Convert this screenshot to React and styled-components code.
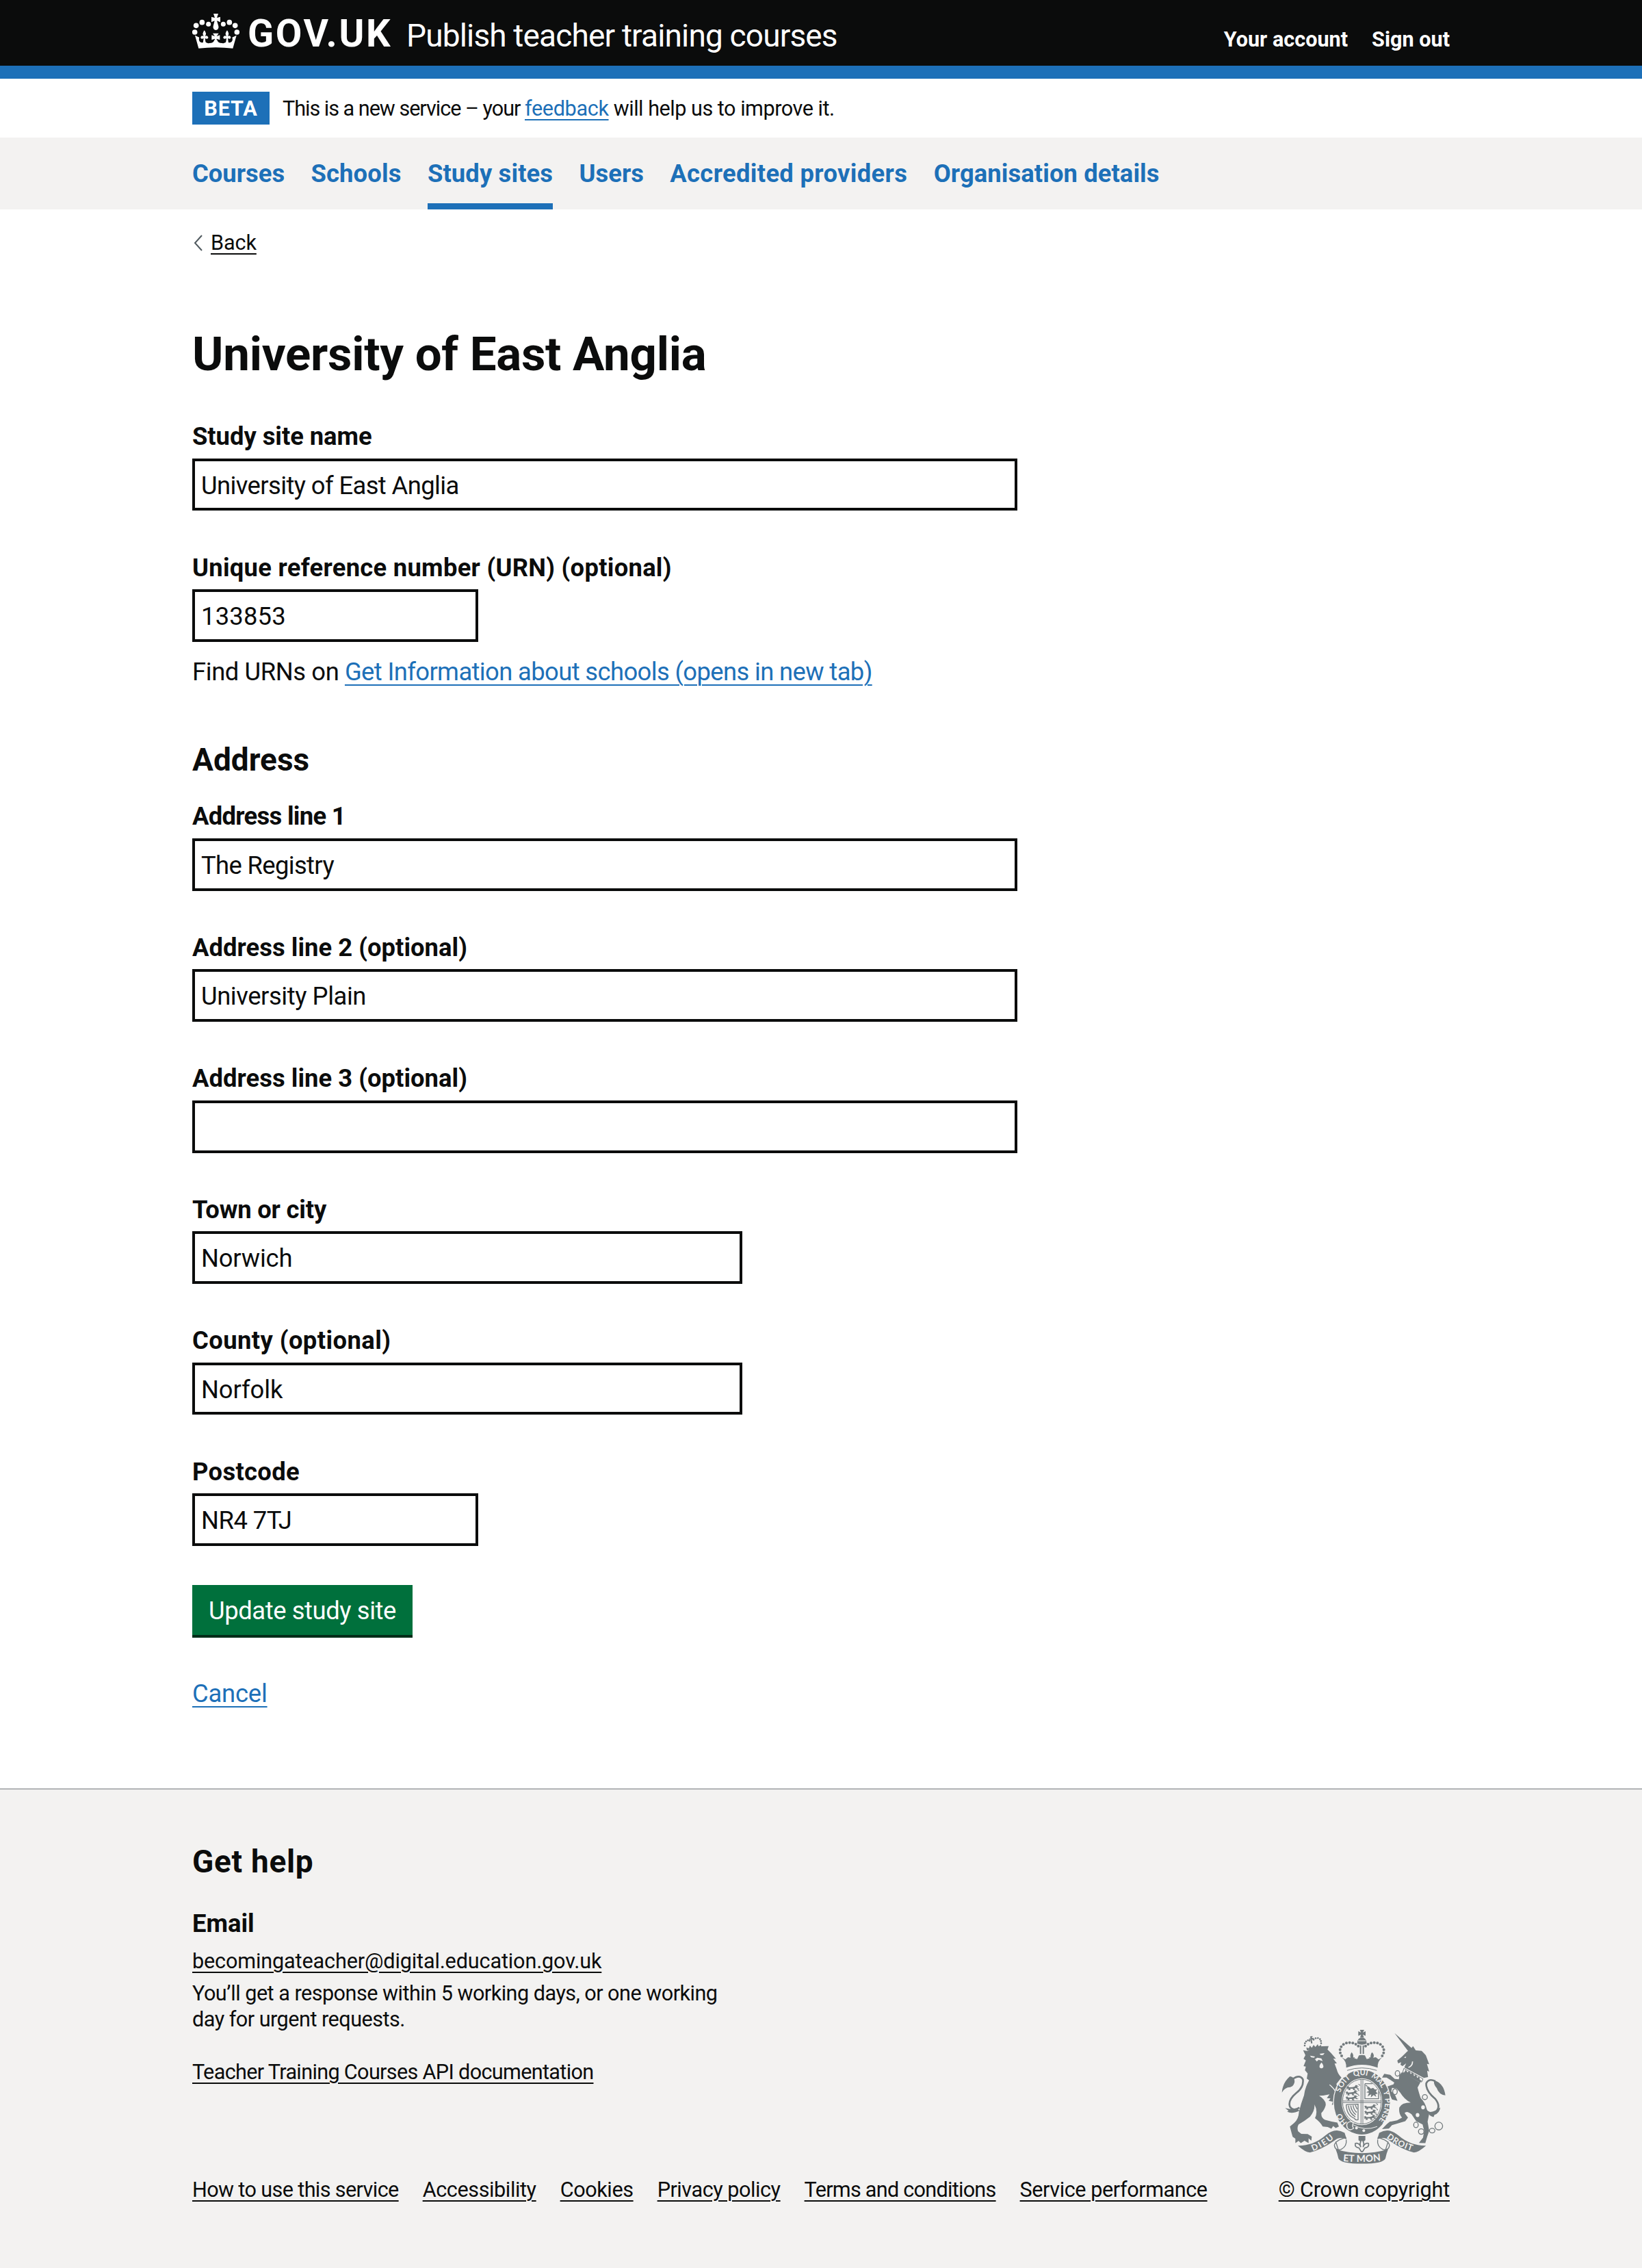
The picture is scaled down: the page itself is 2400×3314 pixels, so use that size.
import React from "react";
import styled, { createGlobalStyle } from "styled-components";

const c = {
  ink: "#0b0c0c",
  blue: "#1d70b8",
  grey: "#f3f2f1",
  line: "#b1b4b6",
  green: "#00703c",
  greenDark: "#002d18",
  crest: "#727a7d",
};

const GlobalStyle = createGlobalStyle`
  *, *::before, *::after { box-sizing: border-box; }
  body {
    margin: 0;
    background: #fff;
    color: ${c.ink};
    font-family: Roboto, "Liberation Sans", sans-serif;
    font-kerning: normal;
  }
  h1, h2, h3, p, ul { margin: 0; padding: 0; }
`;

const Page = styled.div`
  display: flex;
  flex-direction: column;
  min-height: 3314px;
`;

const Container = styled.div`
  width: 1838px;
  margin: 0 auto;
`;

const Track = styled.span`
  letter-spacing: ${(p) => p.$ls || 0}px;
`;

const Link = styled.a`
  color: ${(p) => (p.$plain ? c.ink : c.blue)};
  letter-spacing: ${(p) => p.$ls || 0}px;
  text-decoration: underline;
  text-decoration-thickness: 2px;
  text-underline-offset: 0.1578em;
  white-space: nowrap;
`;

/* Header */
const Header = styled.header`
  height: 115px;
  background: ${c.ink};
  border-bottom: 19px solid ${c.blue};
  color: #fff;
`;
const HeaderRow = styled(Container)`
  display: flex;
  align-items: baseline;
  padding-top: 21px;
`;
const CrownIcon = styled.svg`
  width: 69px;
  height: 51px;
  margin: -1px 12px 0 0;
  align-self: flex-start;
  fill: #fff;
  flex: none;
`;
const LogoText = styled.span`
  width: 232px;
  font-size: 56px;
  line-height: 56px;
  font-weight: 700;
  letter-spacing: 2.6px;
`;
const ServiceName = styled.span`
  font-size: 46px;
  line-height: 46px;
  letter-spacing: -0.84px;
`;
const AccountLinks = styled.nav`
  display: flex;
  gap: 35px;
  margin-left: auto;
  font-size: 30.6px;
  line-height: 38px;
  font-weight: 700;
`;

/* Phase banner */
const PhaseBanner = styled(Container)`
  height: 86px;
  display: flex;
  align-items: center;
`;
const Tag = styled.strong`
  width: 113px;
  height: 48px;
  margin-right: 19px;
  background: ${c.blue};
  color: #fff;
  font-size: 30.6px;
  line-height: 49px;
  letter-spacing: 0.9px;
  text-align: center;
`;
const PhaseText = styled.p`
  padding-top: 1px;
  font-size: 30.6px;
  line-height: 38px;
  white-space: pre;
`;

/* Primary navigation */
const NavBar = styled.div`
  height: 105px;
  background: ${c.grey};
`;
const NavList = styled(Container)`
  display: flex;
  gap: 38.4px;
`;
const NavItem = styled.a`
  height: 105px;
  color: ${c.blue};
  font-size: 36.4px;
  line-height: 106px;
  font-weight: 700;
  letter-spacing: ${(p) => p.$ls}px;
  box-shadow: ${(p) => (p.$current ? `inset 0 -9px 0 ${c.blue}` : "none")};
`;

/* Main content */
const Main = styled(Container)`
  flex: 1;
`;
const BackRow = styled.div`
  display: flex;
  align-items: center;
  gap: 12px;
  padding-top: 29.5px;
  font-size: 30.6px;
  line-height: 38px;
`;
const Chevron = styled.svg`
  width: 15px;
  height: 24px;
  fill: none;
  stroke: #505a5f;
  stroke-width: 2;
`;
const Title = styled.h1`
  margin-top: 106px;
  font-size: 69px;
  line-height: 76px;
  letter-spacing: -0.25px;
`;
const Form = styled.form`
  display: flex;
  flex-direction: column;
  align-items: flex-start;
  padding-top: 56.7px;
`;
const Group = styled.div`
  display: flex;
  flex-direction: column;
  margin-bottom: ${(p) => (p.$hint ? 19.3 : 57.3)}px;
`;
const Label = styled.label`
  margin-bottom: 6.6px;
  font-size: 36.4px;
  line-height: 51px;
  font-weight: 700;
  letter-spacing: ${(p) => p.$ls}px;
`;
const Input = styled.input`
  width: ${(p) => p.$w}px;
  height: 76.6px;
  padding: 2px 9px 0;
  border: 4px solid ${c.ink};
  border-radius: 0;
  background: #fff;
  color: ${c.ink};
  font: 400 36.4px Roboto, sans-serif;
  letter-spacing: ${(p) => p.$ls}px;
`;
const Hint = styled.p`
  margin-bottom: 73.6px;
  font-size: 36.4px;
  line-height: 50px;
`;
const SectionTitle = styled.h2`
  margin-bottom: ${(p) => p.$gap}px;
  font-size: 46px;
  line-height: 58px;
  letter-spacing: ${(p) => p.$ls}px;
`;
const Button = styled.button`
  width: 322px;
  height: 73px;
  margin-bottom: 62px;
  padding: 1px 0 0;
  border: 0;
  background: ${c.green};
  box-shadow: 0 4px 0 ${c.greenDark};
  color: #fff;
  font: 400 36.4px/73px Roboto, sans-serif;
  letter-spacing: -0.41px;
`;
const CancelRow = styled.p`
  font-size: 36.4px;
  line-height: 48px;
`;

/* Footer */
const Footer = styled.footer`
  height: 701px;
  border-top: 2px solid ${c.line};
  background: ${c.grey};
`;
const FooterGrid = styled(Container)`
  display: flex;
  justify-content: space-between;
  align-items: flex-end;
  height: 604.5px;
`;
const FooterMain = styled.div`
  height: 100%;
  padding-top: 76px;
  display: flex;
  flex-direction: column;
  font-size: 30.6px;
  line-height: 38.3px;
`;
const SubTitle = styled.h3`
  margin-bottom: 11.5px;
  font-size: 36.4px;
  line-height: 48px;
`;
const Response = styled.p`
  margin: 9px 0 38.4px;
  letter-spacing: -0.51px;
`;
const FooterLinks = styled.nav`
  display: flex;
  gap: 35px;
  margin-top: auto;
`;
const CrestColumn = styled.div`
  display: flex;
  flex-direction: column;
  align-items: center;
  gap: 19px;
  font-size: 30.6px;
  line-height: 38.3px;
`;
const CrestSvg = styled.svg`
  width: 241.3px;
  height: 198.6px;
  fill: ${c.crest};
  font-family: Lato, Roboto, sans-serif;
  font-weight: 700;
`;

function Crown() {
  const fleur =
    "M86 134Q98 147 89 160Q98 154 103 164Q104 171 96 171L89 169L92 190H80L83 169L76 171Q69 171 70 163Q74 155 83 160Q75 147 86 134Z";
  return (
    <CrownIcon viewBox="33 61 207 153" aria-hidden="true">
      {[[50, 113], [76, 99], [196, 99], [221, 113], [44, 142], [229, 142]].map(([x, y]) => (
        <circle key={`${x}-${y}`} cx={x} cy={y} r="11.5" />
      ))}
      <circle cx="104" cy="107" r="10.5" />
      <circle cx="169" cy="107" r="10.5" />
      <path d="M126 61H147L141 79L156 75V98L141 92L148 116A12 13 0 1 1 125 116L131 92L117 98V75L132 79Z" />
      <path d="M61 213L45 156L64 165Q58 181 72 187Q84 190 88 182Q94 193 108 190Q128 190 130 176L142 176Q144 190 164 190Q178 193 184 182Q188 190 200 187Q214 181 208 165L227 156L211 213Q136 204 61 213Z" />
      <path d={fleur} />
      <path d={fleur} transform="translate(272 0) scale(-1 1)" />
      <path d="M123 147H149L140 160L154 155V176L140 171V192H132V171L118 176V155L132 160Z" />
    </CrownIcon>
  );
}

/* Pearls of the left arch; the right arch mirrors them about x = 453. */
const pearls = [
  [364, 190], [358, 177], [357, 163], [362, 150], [372, 140], [385, 134],
  [399, 132], [413, 134], [426, 139], [437, 147],
];

function Passant({ x, y }) {
  return (
    <path
      transform={`translate(${x} ${y})`}
      d="M0 4L8 1L12 6L26 5L36 3L40 -4L50 -3L46 0L56 1L46 4L50 9L58 12L48 13L42 9L34 12L40 18L30 18L28 12L16 12L18 18H8L10 11L2 15L4 9Z M50 -8Q62 -10 60 0L57 -3Z"
    />
  );
}

function Ribbon() {
  return (
    <g>
      <path d="M172 584Q240 585 292 540Q335 502 377 528L386 556Q355 543 335 560Q275 602 225 614Q204 613 172 584Z" />
      <path
        d="M384 548Q336 560 332 582Q336 608 362 600Q388 586 384 558M338 566L350 604"
        fill="none"
        stroke={c.crest}
        strokeWidth="4"
      />
    </g>
  );
}

const garterWords = [
  ["SOIT", 2, 78],
  ["QUI", 96, 60],
  ["MAL", 172, 70],
  ["Y", 256, 20],
  ["PENSE", 288, 104],
];

function Crest() {
  const bg = c.grey;
  return (
    <CrestSvg viewBox="100 70 724 596" role="img" aria-label="Royal coat of arms">
      {/* lion */}
      <g transform="translate(75 45)">
        <path d="M120 120L138 124Q165 104 205 103L232 102L227 117L242 132L264 158L252 157L268 178L258 179L268 206Q272 225 288 240L266 268L275 300L290 330L290 368L280 358L276 372L264 368L266 355L246 360L250 346L232 342L240 332L224 330L236 314L208 319L190 320Q222 340 219 362Q214 382 200 396Q198 416 216 426L245 433L270 438L277 455L263 462L252 453L244 465L228 457L206 455Q196 436 172 418Q186 390 170 358Q172 385 150 412Q125 432 100 446Q92 460 98 476L112 487L140 488L158 499L156 517L144 507L144 528L126 517L110 528L100 518L86 528L86 508L74 500L68 478L62 455L80 440Q100 425 102 390Q110 355 124 318Q128 285 146 252L136 245L140 222L128 208L132 192L122 190L132 165L122 158L130 142Z" />
        <path
          d="M72 248Q105 224 119 248Q124 282 90 308Q52 340 62 368Q76 390 104 372"
          fill="none"
          stroke={c.crest}
          strokeWidth="8"
        />
        <path d="M27 306Q30 262 62 235Q86 238 82 262Q76 284 52 284Q36 290 27 306Z M41 374Q62 380 96 378L104 386Q70 402 50 390L56 386Z" />
        <g fill={bg}>
          <path d="M150 144L172 148L168 153L156 152ZM192 136L214 133L208 141L198 142Z" />
          <path d="M172 160L182 153L200 156L206 168L188 162L180 170Z" />
          <path d="M201 174Q212 188 208 196Q200 204 192 195Q190 184 201 174Z" />
        </g>
        <path d="M236 272Q262 292 276 330" fill="none" stroke={bg} strokeWidth="4" />
        <path
          d="M137 122L134 108L145 112L150 100L158 110L166 97L174 106L184 94L188 103L199 97L200 110Q165 112 137 122Z"
        />
        {[[127, 100], [128, 90], [133, 82], [141, 77], [149, 79], [166, 74], [175, 68], [185, 67], [194, 72], [198, 80], [199, 90]].map(
          ([x, y]) => (
            <circle key={`${x}-${y}`} cx={x} cy={y} r="4" />
          )
        )}
        <path d="M150 60L162 58L158 67L167 66L166 75L158 72L161 90L154 90L154 74L147 77L146 69L153 69Z" />
      </g>

      {/* unicorn */}
      <g transform="translate(435 45)">
        <path d="M161 45L222 126L240 114Z" />
        <path d="M216 126L232 116L242 102L254 121L280 123L298 142L313 182L303 180L313 214L304 210L308 238L290 242L204 196L212 178L196 190L187 184L190 173L177 178L173 166L194 148Z" />
        <path d="M222 196Q240 190 240 170" fill="none" stroke={bg} strokeWidth="5" />
        <path d="M202 152L212 148L210 155Z" fill={bg} />
        <path
          d="M202 200L286 246L280 260L197 216Z"
          fill={bg}
          stroke={c.crest}
          strokeWidth="3"
        />
        <path d="M206 214L210 206L218 218L226 210L232 225L241 217L247 234L256 226L260 242L270 236L272 250L280 254L274 262L200 222Z" />
        <path d="M194 216L274 262L262 284Q270 315 276 330Q296 350 302 378L312 404L306 434L313 474L304 500L296 528L268 527L286 504L291 474L284 446L256 432L236 402Q215 384 205 396L220 416L208 432L150 449L136 464L106 466L128 444L140 434L172 428L194 416Q178 398 182 372Q192 350 232 350Q204 336 186 306L170 288L150 285L147 300L164 318L174 342L150 336L132 300L118 284L156 270L160 262L142 250L126 240L106 240L116 224L142 228L162 246L180 248L182 230Z" />
        <path
          d="M340 256Q310 242 300 266Q298 300 340 334Q368 370 338 394Q318 404 300 386"
          fill="none"
          stroke={c.crest}
          strokeWidth="8"
        />
        <path d="M334 252Q376 262 384 318Q356 316 346 286Q332 272 334 252ZM298 382Q318 404 362 372Q358 398 336 404L332 414Q310 408 298 382Z" />
        <g fill={bg}>
          <ellipse cx="286" cy="371" rx="8" ry="9" />
          <ellipse cx="262" cy="405" rx="8" ry="9" />
        </g>
        <g fill="none" stroke={c.crest} strokeWidth="4">
          <ellipse cx="174" cy="222" rx="10" ry="12" />
          <ellipse cx="163" cy="302" rx="10" ry="13" />
          <circle cx="294" cy="326" r="11" />
          <ellipse cx="255" cy="448" rx="10" ry="12" />
          <circle cx="278" cy="477" r="12" />
          <ellipse cx="326" cy="473" rx="12" ry="10" />
          <circle cx="355" cy="453" r="17" />
        </g>
      </g>

      {/* garter and shield */}
      <ellipse cx="453" cy="393" rx="127" ry="147" fill={bg} />
      <ellipse cx="453" cy="393" rx="123" ry="142" />
      <ellipse cx="453" cy="391" rx="89" ry="103" fill={bg} />
      <ellipse cx="453" cy="391" rx="85" ry="98" fill={bg} stroke={c.crest} strokeWidth="3" />
      <path d="M449 293V489M457 293V489M368 388H538M368 395H538" stroke={c.crest} strokeWidth="3" />
      <Passant x={385} y={322} />
      <Passant x={381} y={345} />
      <Passant x={381} y={367} />
      <Passant x={463} y={407} />
      <Passant x={463} y={430} />
      <Passant x={461} y={453} />
      <path d="M466 312H500M466 312V378H526V345M470 318L478 326" fill="none" stroke={c.crest} strokeWidth="4" />
      <path d="M474 330L482 324L492 334L502 330L510 338L520 336L514 346L522 356L512 358L516 370L504 362L492 372L494 358L478 368L484 352L472 350L484 344Z" />
      <path
        d="M384 404L436 402V470Q424 474 420 464Q386 452 384 404M394 408Q396 440 424 458M404 408Q406 432 426 448M414 407Q416 426 430 438M424 406L432 424"
        fill="none"
        stroke={c.crest}
        strokeWidth="4"
      />
      <g fill={bg}>
        <path id="garter-main" d="M358 353A101 118 0 1 1 518 483" fill="none" />
        <path id="garter-start" d="M389 483A101 118 0 0 1 352 400" fill="none" />
        {garterWords.map(([word, offset, length]) => (
          <text key={word} fontSize="33">
            <textPath href="#garter-main" startOffset={offset} textLength={length}>{word}</textPath>
          </text>
        ))}
        <text fontSize="33">
          <textPath href="#garter-start">HO</textPath>
        </text>
        <circle cx="429" cy="507" r="6" />
        <circle cx="461" cy="518" r="6" />
      </g>
      <path d="M388 486Q402 472 416 484Q408 494 416 508Q400 520 390 508Q384 498 388 486Z" fill={c.crest} stroke={bg} strokeWidth="4" />
      <path d="M414 492Q465 522 520 500" fill="none" stroke={bg} strokeWidth="3" />

      {/* crown over the garter */}
      <path d="M364 176L374 200Q386 214 384 244Q380 258 392 266Q453 240 514 266Q526 258 522 244Q520 214 532 200L542 176Z" fill={bg} />
      <path d="M364 196L380 206L392 196L402 206L408 176L416 200L432 204L440 188L453 186L466 188L474 204L490 200L494 176L502 206L514 196L526 206L542 196Q520 214 522 242Q453 216 384 242Q386 214 364 196Z" />
      <path d="M388 254Q453 232 518 254" fill="none" stroke={c.crest} strokeWidth="3" />
      {pearls.map(([x, y]) => (
        <g key={`${x}-${y}`}>
          <circle cx={x} cy={y} r="6" />
          <circle cx={906 - x} cy={y} r="6" />
        </g>
      ))}
      <path d="M432 136Q433 110 453 110Q473 110 474 136Q453 146 432 136Z" />
      <path d="M436 124H470" stroke={bg} strokeWidth="3" />
      <path d="M447 144V182M459 144V182" stroke={c.crest} strokeWidth="6" />
      <path d="M444 76H463L457 88L469 82V102L457 97L462 110H445L449 97L437 102V82L449 88Z" />
      <path d="M408 174Q420 188 412 198L422 196L416 208H398L392 196L404 198Q398 188 408 174Z" />
      <path d="M498 174Q510 188 502 198L514 196L508 208H490L484 196L494 198Q488 188 498 174Z" />

      {/* motto ribbon */}
      <Ribbon />
      <g transform="translate(906 0) scale(-1 1)">
        <Ribbon />
      </g>
      <path d="M438 541H468V560L460 566H446L438 560Z" />
      <path
        d="M453 556Q466 574 458 590Q466 570 482 574Q486 592 466 594L456 610H450L440 594Q420 592 424 574Q440 570 448 590Q440 574 453 556Z"
        fill={bg}
        stroke={c.crest}
        strokeWidth="5"
      />
      <path d="M338 600Q453 634 568 600Q560 620 556 640Q546 663 453 663Q360 663 350 640Q346 620 338 600Z" />
      <g fill={bg} fontSize="42">
        <path id="motto-left" d="M238 608Q290 588 336 548" fill="none" />
        <path id="motto-mid" d="M370 652Q453 660 540 649" fill="none" />
        <path id="motto-right" d="M560 549Q608 588 676 608" fill="none" />
        <text fontSize="37">
          <textPath href="#motto-left" textLength="108">DIEU</textPath>
        </text>
        <text>
          <textPath href="#motto-mid" textLength="166">ET MON</textPath>
        </text>
        <text fontSize="37">
          <textPath href="#motto-right" textLength="126">DROIT</textPath>
        </text>
      </g>
    </CrestSvg>
  );
}

const navItems = [
  ["Courses", 0],
  ["Schools", 0.12],
  ["Study sites", 0.12],
  ["Users", 0],
  ["Accredited providers", 0.33],
  ["Organisation details", 0.08],
];

const addressFields = [
  { id: "line1", label: "Address line 1", ls: -0.7, value: "The Registry", vls: -0.64, w: 1206 },
  { id: "line2", label: "Address line 2 (optional)", ls: 0.03, value: "University Plain", vls: -0.43, w: 1206 },
  { id: "line3", label: "Address line 3 (optional)", ls: 0.03, value: "", vls: 0, w: 1206 },
  { id: "town", label: "Town or city", ls: -0.19, value: "Norwich", vls: -0.2, w: 804 },
  { id: "county", label: "County (optional)", ls: 0.42, value: "Norfolk", vls: -0.1, w: 804 },
  { id: "postcode", label: "Postcode", ls: 0.32, value: "NR4 7TJ", vls: -0.5, w: 418 },
];

const footerLinks = [
  ["How to use this service", -0.62],
  ["Accessibility", -0.4],
  ["Cookies", -0.4],
  ["Privacy policy", -0.46],
  ["Terms and conditions", -0.73],
  ["Service performance", -0.43],
];

function Field({ id, label, ls, value, vls, w, hint }) {
  return (
    <Group $hint={hint}>
      <Label htmlFor={id} $ls={ls}>{label}</Label>
      <Input id={id} type="text" defaultValue={value} $ls={vls} $w={w} />
    </Group>
  );
}

export default function App() {
  return (
    <Page>
      <GlobalStyle />
      <Header>
        <HeaderRow>
          <Crown />
          <LogoText>GOV.UK</LogoText>
          <ServiceName>Publish teacher training courses</ServiceName>
          <AccountLinks>
            <Track>Your account</Track>
            <Track>Sign out</Track>
          </AccountLinks>
        </HeaderRow>
      </Header>

      <PhaseBanner>
        <Tag>BETA</Tag>
        <PhaseText>
          <Track $ls={-1.02}>{"This is a new service – your "}</Track>
          <Link $ls={-0.35}>feedback</Link>
          <Track $ls={-0.48}>{" will help us to improve it."}</Track>
        </PhaseText>
      </PhaseBanner>

      <NavBar>
        <NavList as="nav">
          {navItems.map(([label, ls]) => (
            <NavItem key={label} $ls={ls} $current={label === "Study sites"}>{label}</NavItem>
          ))}
        </NavList>
      </NavBar>

      <Main as="main">
        <BackRow>
          <Chevron viewBox="0 0 15 24">
            <path d="M14 1L4 12L14 23" />
          </Chevron>
          <Link $plain $ls={-0.1}>Back</Link>
        </BackRow>
        <Title>University of East Anglia</Title>
        <Form>
          <Field id="name" label="Study site name" ls={-0.05} value="University of East Anglia" vls={-0.6} w={1206} />
          <Field id="urn" label="Unique reference number (URN) (optional)" ls={0.27} value="133853" vls={0.2} w={418} hint />
          <Hint>
            <Track $ls={-0.41}>Find URNs on </Track>
            <Link $ls={-0.62}>Get Information about schools (opens in new tab)</Link>
          </Hint>
          <SectionTitle $gap={28.6} $ls={0}>Address</SectionTitle>
          {addressFields.map((f) => (
            <Field key={f.id} {...f} />
          ))}
          <Button type="button">Update study site</Button>
          <CancelRow>
            <Link $ls={-0.2}>Cancel</Link>
          </CancelRow>
        </Form>
      </Main>

      <Footer>
        <FooterGrid>
          <FooterMain>
            <SectionTitle $gap={38} $ls={0.7}>Get help</SectionTitle>
            <SubTitle>Email</SubTitle>
            <p>
              <Link $plain $ls={-0.14}>becomingateacher@digital.education.gov.uk</Link>
            </p>
            <Response>
              You’ll get a response within 5 working days, or one working
              <br />
              day for urgent requests.
            </Response>
            <p>
              <Link $plain $ls={-0.66}>Teacher Training Courses API documentation</Link>
            </p>
            <FooterLinks>
              {footerLinks.map(([label, ls]) => (
                <Link key={label} $plain $ls={ls}>{label}</Link>
              ))}
            </FooterLinks>
          </FooterMain>
          <CrestColumn>
            <Crest />
            <Link $plain $ls={-0.18}>© Crown copyright</Link>
          </CrestColumn>
        </FooterGrid>
      </Footer>
    </Page>
  );
}
